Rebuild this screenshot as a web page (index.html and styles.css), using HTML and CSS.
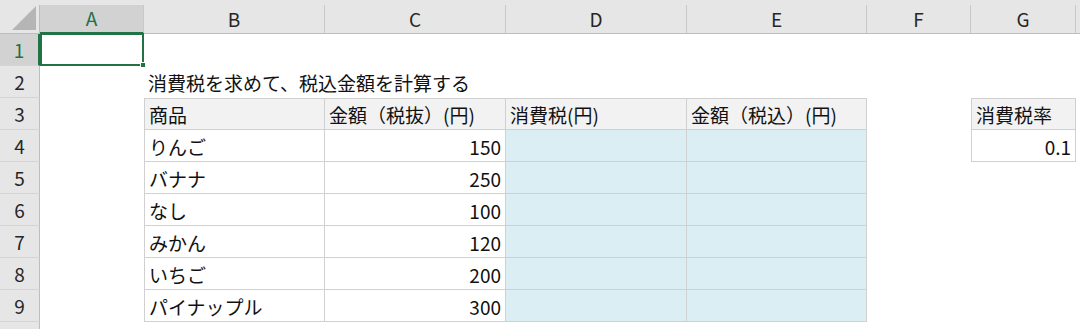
FILE: index.html
```html
<!DOCTYPE html>
<html lang="ja">
<head>
<meta charset="utf-8">
<link rel="stylesheet" href="styles.css">
</head>
<body>
<div class="sheet">
  <div class="colbar">
    <div class="corner"><span class="tri"></span></div>
    <div class="ch sel w-a">A</div>
    <div class="ch w-b">B</div>
    <div class="ch w-c">C</div>
    <div class="ch w-d">D</div>
    <div class="ch w-e">E</div>
    <div class="ch w-f">F</div>
    <div class="ch w-g">G</div>
    <div class="ch w-h"></div>
  </div>

  <div class="row">
    <div class="rh sel">1</div>
    <div class="c w-a active"><span class="handle"></span></div>
    <div class="c w-b"></div><div class="c w-c"></div><div class="c w-d"></div><div class="c w-e"></div><div class="c w-f"></div><div class="c w-g"></div>
  </div>

  <div class="row">
    <div class="rh">2</div>
    <div class="c w-a"></div>
    <div class="c w-b overflow">消費税を求めて、税込金額を計算する</div>
  </div>

  <div class="row">
    <div class="rh">3</div>
    <div class="c w-a"></div>
    <div class="c w-b t th tl tt">商品</div>
    <div class="c w-c t th tt">金額（税抜）(円)</div>
    <div class="c w-d t th tt">消費税(円)</div>
    <div class="c w-e t th tt">金額（税込）(円)</div>
    <div class="c w-f"></div>
    <div class="c w-g t th tl tt">消費税率</div>
  </div>

  <div class="row">
    <div class="rh">4</div>
    <div class="c w-a"></div>
    <div class="c w-b t tl">りんご</div>
    <div class="c w-c t num">150</div>
    <div class="c w-d t blue"></div>
    <div class="c w-e t blue"></div>
    <div class="c w-f"></div>
    <div class="c w-g t tl num">0.1</div>
  </div>

  <div class="row">
    <div class="rh">5</div>
    <div class="c w-a"></div>
    <div class="c w-b t tl">バナナ</div>
    <div class="c w-c t num">250</div>
    <div class="c w-d t blue"></div>
    <div class="c w-e t blue"></div>
  </div>

  <div class="row">
    <div class="rh">6</div>
    <div class="c w-a"></div>
    <div class="c w-b t tl">なし</div>
    <div class="c w-c t num">100</div>
    <div class="c w-d t blue"></div>
    <div class="c w-e t blue"></div>
  </div>

  <div class="row">
    <div class="rh">7</div>
    <div class="c w-a"></div>
    <div class="c w-b t tl">みかん</div>
    <div class="c w-c t num">120</div>
    <div class="c w-d t blue"></div>
    <div class="c w-e t blue"></div>
  </div>

  <div class="row">
    <div class="rh">8</div>
    <div class="c w-a"></div>
    <div class="c w-b t tl">いちご</div>
    <div class="c w-c t num">200</div>
    <div class="c w-d t blue"></div>
    <div class="c w-e t blue"></div>
  </div>

  <div class="row">
    <div class="rh">9</div>
    <div class="c w-a"></div>
    <div class="c w-b t tl">パイナップル</div>
    <div class="c w-c t num">300</div>
    <div class="c w-d t blue"></div>
    <div class="c w-e t blue"></div>
  </div>

  <div class="row">
    <div class="rh">10</div>
  </div>
</div>
</body>
</html>
```
FILE: styles.css
```css
* { box-sizing: border-box; }
html, body { margin: 0; padding: 0; background: #fff; }
body {
  width: 1080px;
  height: 329px;
  overflow: hidden;
  font-family: "Noto Sans CJK JP", "Noto Sans", sans-serif;
  color: #111;
}
.sheet { display: flex; flex-direction: column; }

.w-a { width: 104px; }
.w-b { width: 181px; }
.w-c { width: 181px; }
.w-d { width: 181px; }
.w-e { width: 180px; }
.w-f { width: 104px; }
.w-g { width: 105px; }
.w-h { flex: 1; }

/* column header bar */
.colbar {
  display: flex;
  height: 34px;
  background: #e6e6e6;
  border-bottom: 1px solid #bdbdbd;
  flex: none;
}
.corner {
  width: 40px;
  position: relative;
  border-right: 1px solid #bdbdbd;
  margin-top: 5px;
}
.tri {
  position: absolute;
  right: 3px;
  bottom: 3px;
  width: 0; height: 0;
  border-left: 24px solid transparent;
  border-bottom: 24px solid #b5b5b5;
}
.ch {
  margin-top: 5px;
  display: flex;
  align-items: center;
  justify-content: center;
  font-size: 19px;
  color: #262626;
  border-right: 1px solid #c8c8c8;
  line-height: 1;
  padding-bottom: 2px;
}
.ch.w-h { border-right: none; }
.ch.sel {
  background: #d2d2d2;
  color: #217346;
  border-bottom: 2px solid #217346;
  margin-bottom: -1px;
}

/* rows */
.row {
  display: flex;
  height: 32px;
  flex: none;
}
.rh {
  width: 40px;
  flex: none;
  background: #e6e6e6;
  border-right: 1px solid #bdbdbd;
  border-bottom: 1px solid #d4d4d4;
  display: flex;
  align-items: center;
  justify-content: center;
  font-size: 19px;
  color: #262626;
  line-height: 1;
}
.rh.sel {
  background: #d2d2d2;
  color: #217346;
  border-right: 2px solid #217346;
}

.c {
  flex: none;
  height: 32px;
  display: flex;
  align-items: center;
  font-size: 19px;
  line-height: 1;
  white-space: nowrap;
  padding: 1px 4px 0;
}
.overflow { overflow: visible; }
.t {
  border-right: 1px solid #d0d0d0;
  border-bottom: 1px solid #d0d0d0;
}
.tl { border-left: 1px solid #d0d0d0; }
.tt { border-top: 1px solid #d0d0d0; }
.th { background: #f2f2f2; }
.blue { background: #daeef3; }
.num { justify-content: flex-end; }

.active {
  position: relative;
  border: 2px solid #217346;
  height: 33px;
  margin-top: -1px;
}
.handle {
  position: absolute;
  right: -4px;
  bottom: -4px;
  width: 6px;
  height: 6px;
  background: #217346;
  border: 1px solid #fff;
}
```
